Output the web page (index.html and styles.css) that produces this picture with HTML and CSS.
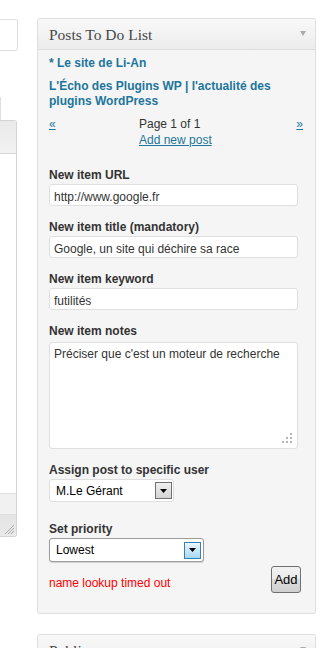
FILE: index.html
```html
<!DOCTYPE html>
<html>
<head>
    <title>Posts To Do List</title>
    <link rel="stylesheet" href="styles.css">
</head>
<body>
    <div class="editeur">
        <div class="boite-titre"></div>
        <div class="onglet"></div>
        <div class="boite-editeur">
            <div class="barre-outils"></div>
            <div class="zone-texte"></div>
            <div class="chemin"></div>
            <div class="statut">
                <svg class="poignee" width="11" height="11" viewBox="0 0 11 11">
                    <path d="M10 1 L1 10 M10 4 L4 10 M10 7 L7 10" stroke="#aaa" stroke-width="1" fill="none"/>
                </svg>
            </div>
        </div>
    </div>

    <div class="colonne">
        <div class="postbox">
            <h3>Posts To Do List <span class="fleche"></span></h3>
            <div class="inside">
                <a class="lien-site" href="#">* Le site de Li-An</a>
                <a class="lien-site lien-second" href="#">L'Écho des Plugins WP | l'actualité des plugins WordPress</a>

                <div class="pagination">
                    <a href="#">«</a>
                    <div>
                        Page 1 of 1<br>
                        <a href="#">Add new post</a>
                    </div>
                    <a href="#">»</a>
                </div>

                <div class="formulaire">
                    <div class="champ">
                        <label for="url">New item URL</label>
                        <input type="text" id="url" class="texte" value="http://www.google.fr">
                    </div>
                    <div class="champ">
                        <label for="titre">New item title (mandatory)</label>
                        <input type="text" id="titre" class="texte" value="Google, un site qui déchire sa race">
                    </div>
                    <div class="champ">
                        <label for="motcle">New item keyword</label>
                        <input type="text" id="motcle" class="texte" value="futilités">
                    </div>
                    <div class="champ">
                        <label for="notes">New item notes</label>
                        <div class="zone-notes">
                            <textarea id="notes" class="notes">Préciser que c'est un moteur de recherche</textarea>
                            <svg class="grip" width="11" height="11" viewBox="0 0 11 11">
                                <rect x="8" y="0" width="2" height="2" fill="#b5b5b5"/>
                                <rect x="4" y="4" width="2" height="2" fill="#b5b5b5"/>
                                <rect x="8" y="4" width="2" height="2" fill="#b5b5b5"/>
                                <rect x="0" y="8" width="2" height="2" fill="#b5b5b5"/>
                                <rect x="4" y="8" width="2" height="2" fill="#b5b5b5"/>
                                <rect x="8" y="8" width="2" height="2" fill="#b5b5b5"/>
                            </svg>
                        </div>
                    </div>
                    <div class="champ">
                        <label>Assign post to specific user</label>
                        <div class="liste">
                            <span>M.Le Gérant</span>
                            <span class="liste-bouton">
                                <svg width="7" height="4" viewBox="0 0 7 4"><polygon points="0,0 7,0 3.5,4" fill="#000"/></svg>
                            </span>
                        </div>
                    </div>
                    <div class="champ champ-priorite">
                        <label>Set priority</label>
                        <div class="liste liste-active">
                            <span>Lowest</span>
                            <span class="liste-bouton">
                                <svg width="7" height="4" viewBox="0 0 7 4"><polygon points="0,0 7,0 3.5,4" fill="#000"/></svg>
                            </span>
                        </div>
                    </div>
                    <div class="actions">
                        <span class="erreur">name lookup timed out</span>
                        <button class="bouton">Add</button>
                    </div>
                </div>
            </div>
        </div>

        <div class="postbox">
            <h3>Publier <span class="fleche"></span></h3>
            <div class="inside"></div>
        </div>
    </div>
</body>
</html>
```

FILE: styles.css
```css
html, body {
    overflow: hidden;
}

body {
    margin: 0;
    background-color: #fff;
    font-family: "Liberation Sans", Arial, sans-serif;
    font-size: 12px;
    line-height: 16px;
    color: #333;
    display: flex;
    align-items: flex-start;
}

a {
    color: #21759b;
}

/* colonne de gauche : l'éditeur coupé par le bord */
.editeur {
    width: 18px;
    flex: none;
    padding-top: 19px;
}

.boite-titre {
    height: 30px;
    border: 1px solid #dfdfdf;
    border-left: none;
    border-radius: 0 3px 3px 0;
    background-color: #fff;
}

.onglet {
    width: 1px;
    height: 23px;
    margin-top: 46px;
    background-color: #dfdfdf;
}

.boite-editeur {
    width: 16px;
    border: 1px solid #d4d4d4;
    border-left: none;
    border-radius: 0 3px 3px 0;
    overflow: hidden;
}

.barre-outils {
    height: 32px;
    background: linear-gradient(#e9e9e9, #f2f2f2);
    border-bottom: 1px solid #d4d4d4;
}

.zone-texte {
    height: 339px;
    background-color: #fff;
    border-bottom: 1px solid #dfdfdf;
}

.chemin {
    height: 20px;
    background-color: #f1f1f1;
    border-bottom: 1px solid #dfdfdf;
}

.statut {
    height: 21px;
    background: linear-gradient(#e4e4e4, #eaeaea);
    display: flex;
    justify-content: flex-end;
    align-items: flex-end;
}

.poignee {
    margin: 0 1px 1px 0;
}

/* colonne de droite */
.colonne {
    width: 279px;
    flex: none;
    margin-left: 19px;
    padding-top: 18px;
}

.postbox {
    border: 1px solid #dfdfdf;
    border-radius: 3px;
    background-color: #f5f5f5;
    margin-bottom: 20px;
}

.postbox h3 {
    margin: 0;
    height: 30px;
    padding: 0 9px 0 11px;
    line-height: 31px;
    font-family: "Liberation Serif", Georgia, serif;
    font-size: 15.5px;
    font-weight: normal;
    color: #464646;
    background: linear-gradient(#f9f9f9, #ececec);
    border-bottom: 1px solid #dfdfdf;
    border-radius: 3px 3px 0 0;
    display: flex;
    justify-content: space-between;
    overflow: hidden;
}

.fleche {
    width: 0;
    height: 0;
    margin-top: 12px;
    border-left: 3.5px solid transparent;
    border-right: 3.5px solid transparent;
    border-top: 5px solid #aaa;
}

.inside {
    padding: 5px 11px 20px;
}

.lien-site {
    display: block;
    font-weight: bold;
    text-decoration: none;
}

.lien-second {
    margin-top: 8px;
    line-height: 15px;
}

.pagination {
    display: grid;
    grid-template-columns: 90px 1fr auto;
    margin-top: 7px;
    margin-right: 1px;
}

.formulaire {
    margin-top: 19px;
}

.champ + .champ {
    margin-top: 13px;
}

.champ label {
    display: block;
    font-weight: bold;
    margin-bottom: 1px;
}

.texte {
    display: block;
    box-sizing: border-box;
    width: 249px;
    height: 22px;
    margin: 0;
    padding: 4px 4px 0;
    border: 1px solid #dfdfdf;
    border-radius: 3px;
    background-color: #fff;
    font-family: inherit;
    font-size: 12px;
    color: #333;
}

.zone-notes {
    position: relative;
    width: 249px;
    margin-top: 3px;
}

.notes {
    display: block;
    box-sizing: border-box;
    width: 249px;
    height: 107px;
    margin: 0;
    padding: 3px 4px;
    border: 1px solid #dfdfdf;
    border-radius: 3px;
    background-color: #fff;
    font-family: inherit;
    font-size: 12px;
    line-height: 16px;
    color: #333;
    resize: none;
}

.grip {
    position: absolute;
    right: 5px;
    bottom: 5px;
}

.liste {
    box-sizing: border-box;
    width: 125px;
    height: 23px;
    padding: 0 1px 0 6px;
    border: 1px solid #dfdfdf;
    border-radius: 3px;
    background-color: #fff;
    color: #000;
    display: flex;
    align-items: center;
    justify-content: space-between;
}

.liste-bouton {
    box-sizing: border-box;
    width: 17px;
    height: 17px;
    border: 1px solid #707070;
    background: linear-gradient(#f0f0f0, #d4d4d4);
    display: flex;
    align-items: center;
    justify-content: center;
}

.champ-priorite {
    margin-top: 19px !important;
}

.liste-active {
    width: 155px;
    height: 24px;
    padding-right: 2px;
    border-color: #9c9c9c;
    box-shadow: 0 1px 1px rgba(0, 0, 0, 0.15);
}

.liste-active .liste-bouton {
    border-color: #3c7fb1;
    background: linear-gradient(#eaf6fd, #a7d9f5);
}

.actions {
    display: flex;
    justify-content: space-between;
    align-items: flex-end;
    margin-top: 4px;
}

.erreur {
    color: #f00;
    padding-bottom: 2px;
}

.bouton {
    width: 30px;
    height: 27px;
    margin-right: 3px;
    padding: 0;
    border: 1px solid #707070;
    border-radius: 3px;
    background: linear-gradient(#f2f2f2 0%, #ebebeb 50%, #dddddd 50%, #cfcfcf 100%);
    font-family: "Liberation Sans", Arial, sans-serif;
    font-size: 13px;
    color: #000;
}
```
